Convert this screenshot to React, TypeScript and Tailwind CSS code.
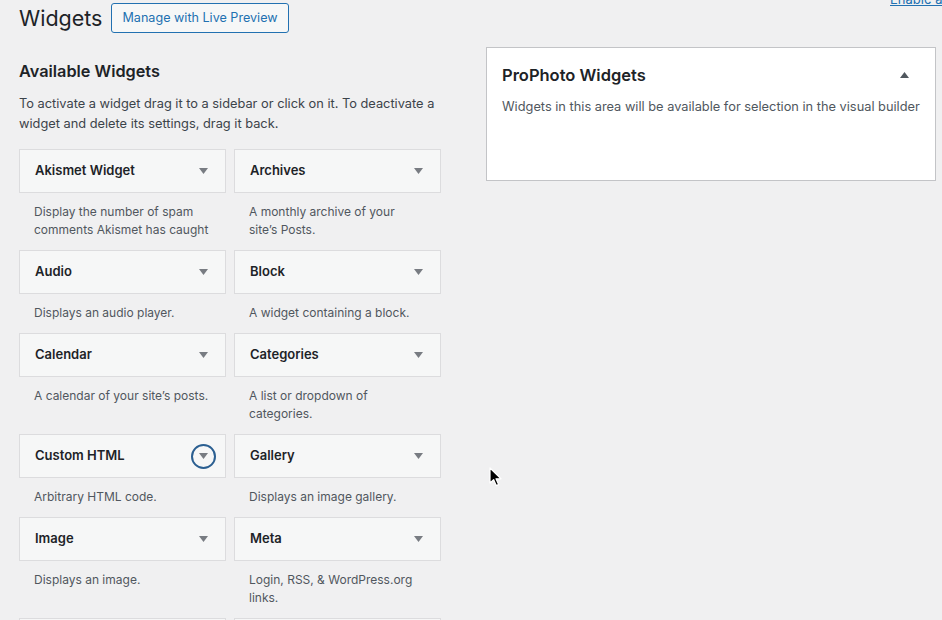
import React from "react";

type Widget = { title: string; desc: string; focused?: boolean };

const widgets: Widget[] = [
  { title: "Akismet Widget", desc: "Display the number of spam comments Akismet has caught" },
  { title: "Archives", desc: "A monthly archive of your site’s Posts." },
  { title: "Audio", desc: "Displays an audio player." },
  { title: "Block", desc: "A widget containing a block." },
  { title: "Calendar", desc: "A calendar of your site’s posts." },
  { title: "Categories", desc: "A list or dropdown of categories." },
  { title: "Custom HTML", desc: "Arbitrary HTML code.", focused: true },
  { title: "Gallery", desc: "Displays an image gallery." },
  { title: "Image", desc: "Displays an image." },
  { title: "Meta", desc: "Login, RSS, & WordPress.org links." },
  { title: "Navigation Menu", desc: "Add a navigation menu to your sidebar." },
  { title: "Pages", desc: "A list of your site’s Pages." },
];

function Arrow({ up = false }: { up?: boolean }) {
  return (
    <svg width="9" height="6" viewBox="0 0 9 6" className="block">
      {up ? (
        <polygon points="0,6 9,6 4.5,0" fill="#50575e" />
      ) : (
        <polygon points="0,0 9,0 4.5,6" fill="#787c82" />
      )}
    </svg>
  );
}

function WidgetItem({ w }: { w: Widget }) {
  return (
    <div>
      <div className="flex h-[44px] items-center justify-between border border-[#dcdcde] bg-[#f6f7f7] pl-[15px] pr-[9px]">
        <span className="text-[13px] font-semibold text-[#1d2327]">{w.title}</span>
        <span
          className={
            w.focused
              ? "flex h-[25px] w-[25px] items-center justify-center rounded-full border-2 border-[#2b5f91]"
              : "flex h-[25px] w-[25px] items-center justify-center"
          }
        >
          <Arrow />
        </span>
      </div>
      <p className="px-[15px] pb-[11px] pt-[10px] text-[12px] leading-[18px] text-[#50575e]">{w.desc}</p>
    </div>
  );
}

export default function App() {
  return (
    <div className="relative h-[620px] w-[942px] overflow-hidden bg-[#f0f0f1] font-['Inter',sans-serif] text-[#1d2327]">
      {/* top-right screen-options link, mostly scrolled out of view */}
      <a className="absolute left-[890px] top-[-10px] whitespace-nowrap text-[13px] text-[#2271b1] underline">
        Enable accessibility mode
      </a>

      <div className="flex items-center gap-[9px] pl-[19px] pt-[3px]">
        <h1 className="text-[21.5px] leading-[29px] font-normal">Widgets</h1>
        <button className="h-[30px] rounded-[3px] border border-[#2271b1] bg-[#f6f7f7] px-[10px] text-[12.6px] text-[#2271b1]">
          Manage with Live Preview
        </button>
      </div>

      <div className="flex">
        <div className="ml-[19px] w-[422px]">
          <h2 className="mt-[26px] text-[16.3px] leading-[24px] font-semibold">Available Widgets</h2>
          <p className="mt-[11px] text-[12.8px] leading-[20px] text-[#3c434a]">
            To activate a widget drag it to a sidebar or click on it. To deactivate a widget and delete its settings, drag it back.
          </p>
          <div className="mt-[15px] grid grid-cols-2 gap-x-[8px]">
            {widgets.map((w) => (
              <WidgetItem key={w.title} w={w} />
            ))}
          </div>
        </div>

        <div className="ml-[45px] mt-[14px] h-[134px] w-[450px] border border-[#c3c4c7] bg-white px-[15px] pt-[15px]">
          <div className="flex items-center justify-between pr-[11px]">
            <h3 className="text-[16.5px] leading-[24px] font-semibold">ProPhoto Widgets</h3>
            <Arrow up />
          </div>
          <p className="mt-[10px] whitespace-nowrap text-[12.8px] leading-[20px] text-[#50575e]">
            Widgets in this area will be available for selection in the visual builder
          </p>
        </div>
      </div>

      <svg className="absolute left-[489px] top-[467px]" width="14" height="21" viewBox="0 0 14 21">
        <path d="M1 1 L1 16 L4.6 12.6 L7.2 18.6 L9.6 17.6 L7 11.8 L12 11.8 Z" fill="#000" stroke="#fff" strokeWidth="1.2" strokeLinejoin="round" />
      </svg>
    </div>
  );
}
